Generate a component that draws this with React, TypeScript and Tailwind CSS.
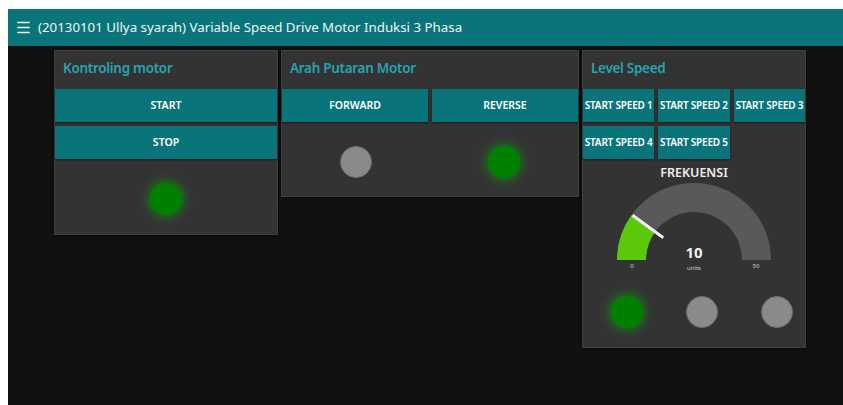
import { Menu } from 'lucide-react'

const font = { fontFamily: '"Noto Sans", "Open Sans", sans-serif' }

function Card({
  title,
  className,
  children,
}: {
  title: string
  className: string
  children: React.ReactNode
}) {
  return (
    <div
      className={`flex flex-col bg-[#333333] border border-[#404040] shadow-[0_1px_3px_rgba(0,0,0,0.6)] ${className}`}
    >
      <div className="h-[38px] flex items-center pl-[8px] pb-[3px] text-[13.5px] font-semibold tracking-[-0.3px] text-[#27a4b2]">
        {title}
      </div>
      {children}
    </div>
  )
}

function Btn({ label, small }: { label: string; small?: boolean }) {
  return (
    <button
      className={`h-[33px] flex items-center justify-center bg-[#097479] text-white font-semibold whitespace-nowrap shadow-[0_1px_2px_rgba(0,0,0,0.55)] ${
        small ? 'text-[10px] tracking-[-0.2px]' : 'text-[10.5px]'
      }`}
    >
      {label}
    </button>
  )
}

function Led({ on }: { on: boolean }) {
  return on ? (
    <div className="w-[32px] h-[32px] rounded-full bg-[#008000] shadow-[0_0_10px_3px_rgba(0,190,0,0.45)]" />
  ) : (
    <div className="w-[32px] h-[32px] rounded-full bg-[#8a8a8a] border border-[#6e6e6e]" />
  )
}

function Gauge({ value, min, max }: { value: number; min: number; max: number }) {
  const cx = 100
  const cy = 78
  const R = 77
  const r = 48
  const a = ((value - min) / (max - min)) * Math.PI
  const pt = (rad: number) => [cx - rad * Math.cos(a), cy - rad * Math.sin(a)]
  const [ox, oy] = pt(R)
  const [ix, iy] = pt(r)
  const [n1x, n1y] = pt(38)
  const [n2x, n2y] = pt(76)
  const [n3x, n3y] = pt(85)
  return (
    <svg width="200" height="92" viewBox="0 0 200 92" className="mx-auto block">
      <path
        d={`M ${cx - R} ${cy} A ${R} ${R} 0 0 1 ${cx + R} ${cy} L ${cx + r} ${cy} A ${r} ${r} 0 0 0 ${cx - r} ${cy} Z`}
        fill="#595959"
      />
      <path
        d={`M ${cx - R} ${cy} A ${R} ${R} 0 0 1 ${ox} ${oy} L ${ix} ${iy} A ${r} ${r} 0 0 0 ${cx - r} ${cy} Z`}
        fill="#5cc80a"
      />
      <line x1={n2x} y1={n2y} x2={n3x} y2={n3y} stroke="#2a2a2a" strokeWidth="1" />
      <line x1={n1x} y1={n1y} x2={n2x} y2={n2y} stroke="#f2f2f2" strokeWidth="3" />
      <text x={cx} y={cy - 2} textAnchor="middle" fill="#f0f0f0" fontSize="15" fontWeight="700" style={font}>
        {value}
      </text>
      <text x={cx} y={cy + 10} textAnchor="middle" fill="#d0d0d0" fontSize="6" style={font}>
        units
      </text>
      <text x={cx - 62} y={cy + 8} textAnchor="middle" fill="#d0d0d0" fontSize="6" style={font}>
        {min}
      </text>
      <text x={cx + 62} y={cy + 8} textAnchor="middle" fill="#d0d0d0" fontSize="6" style={font}>
        {max}
      </text>
    </svg>
  )
}

export default function App() {
  return (
    <div className="w-[843px] h-[405px] bg-white pl-[8px] pt-[9px] overflow-hidden" style={font}>
      <div className="h-full flex flex-col bg-[#111111]">
        {/* Toolbar */}
        <div className="h-[37px] shrink-0 flex items-center bg-[#097479] pl-[7px] text-[13.3px] text-[#eef6f6]">
          <Menu className="w-[17px] h-[17px] mr-[6px]" strokeWidth={2} />
          <span>(20130101 Ullya syarah) Variable Speed Drive Motor Induksi 3 Phasa</span>
        </div>

        {/* Dashboard groups */}
        <div className="flex items-start gap-[3px] pl-[46px] pt-[4px]">
          <Card title="Kontroling motor" className="w-[224px]">
            <div className="flex flex-col gap-[4px]">
              <Btn label="START" />
              <Btn label="STOP" />
            </div>
            <div className="flex justify-center pt-[24px] pb-[19px]">
              <Led on />
            </div>
          </Card>

          <Card title="Arah Putaran Motor" className="w-[298px]">
            <div className="grid grid-cols-2 gap-[4px]">
              <Btn label="FORWARD" />
              <Btn label="REVERSE" />
            </div>
            <div className="grid grid-cols-2 pt-[24px] pb-[18px]">
              <div className="flex justify-center">
                <Led on={false} />
              </div>
              <div className="flex justify-center">
                <Led on />
              </div>
            </div>
          </Card>

          <Card title="Level Speed" className="w-[224px]">
            <div className="grid grid-cols-3 gap-[4px]">
              <Btn small label="START SPEED 1" />
              <Btn small label="START SPEED 2" />
              <Btn small label="START SPEED 3" />
              <Btn small label="START SPEED 4" />
              <Btn small label="START SPEED 5" />
            </div>
            <div className="text-center text-[12.5px] font-semibold text-[#eeeeee] pt-[5px] leading-[18px]">
              FREKUENSI
            </div>
            <Gauge value={10} min={0} max={50} />
            <div className="flex gap-[43px] pl-[28px] pt-[22px] pb-[19px]">
              <Led on />
              <Led on={false} />
              <Led on={false} />
            </div>
          </Card>
        </div>
      </div>
    </div>
  )
}
